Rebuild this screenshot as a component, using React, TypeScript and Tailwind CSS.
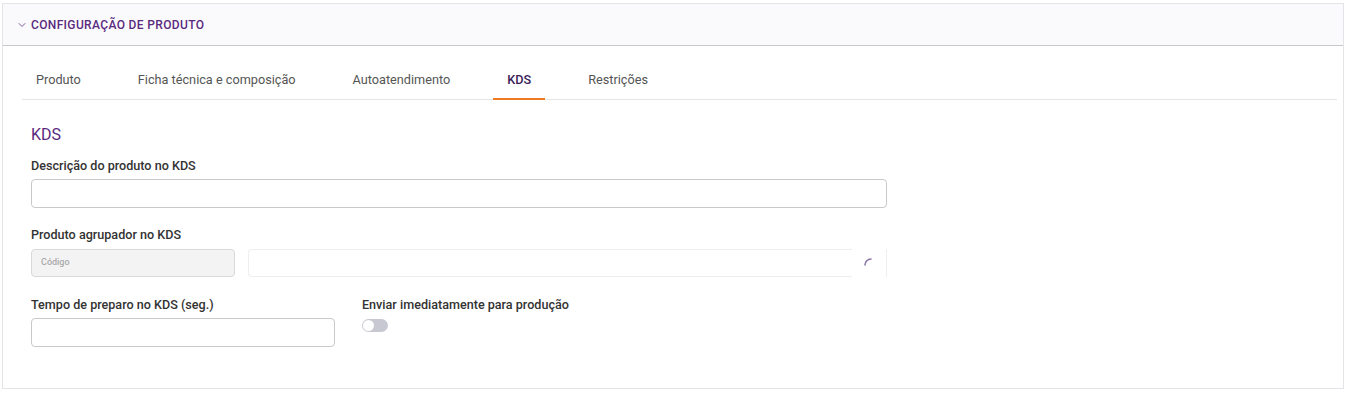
import { ChevronDown } from "lucide-react";

const tabs = ["Produto", "Ficha técnica e composição", "Autoatendimento", "KDS", "Restrições"];

const Label = ({ children }: { children: React.ReactNode }) => (
  <div className="text-[12.6px] font-medium text-[#333] leading-[16px]">{children}</div>
);

export default function App() {
  return (
    <div className="bg-white min-h-[395px] pt-[3px] pl-[2px] pr-[6px] font-['Roboto',sans-serif]">
      <div className="border border-[#e3e3e8] bg-white h-[386px]">
        <div className="h-[42px] bg-[#fafafd] border-b border-[#c8c8cc] flex items-center pl-[13px] gap-[3px]">
          <ChevronDown size={12} strokeWidth={1.5} className="text-[#5a2a7e]" />
          <span className="text-[12px] font-medium uppercase text-[#5a2a7e] tracking-[0.35px]">
            Configuração de produto
          </span>
        </div>

        <div className="pl-[19px] pr-[6px]">
          <div className="mt-[14px] flex gap-[29px] border-b border-[#e6e6e6]">
            {tabs.map((t) => (
              <div
                key={t}
                className={`h-[40px] pt-[1px] px-[14px] flex items-center text-[12.7px] border-b-2 -mb-px ${
                  t === "KDS"
                    ? "border-[#f07a22] text-[#3a1d5a] font-medium"
                    : "border-transparent text-[#555]"
                }`}
              >
                {t}
              </div>
            ))}
          </div>
        </div>

        <div className="pl-[28px] pt-[25px]">
          <div className="text-[16px] text-[#5a2a7e] leading-[20px]">KDS</div>

          <div className="mt-[13px]">
            <Label>Descrição do produto no KDS</Label>
            <div className="mt-[5px] w-[856px] h-[29px] rounded-[4px] border border-[#c9c9cc]" />
          </div>

          <div className="mt-[19px]">
            <Label>Produto agrupador no KDS</Label>
            <div className="mt-[6px] flex items-stretch h-[28px] w-[856px]">
              <div className="w-[204px] rounded-[4px] border border-[#d9d9dc] bg-[#f3f3f4] flex items-center pl-[9px] text-[9px] font-medium text-[#aaa]">
                Código
              </div>
              <div className="ml-[13px] flex-1 border-y border-l border-[#eeeef0] rounded-l-[4px]" />
              <div className="w-[35px] border-r border-[#eeeef0] flex items-center justify-center">
                <svg width="14" height="14" viewBox="0 0 14 14" className="-mt-[2px]">
                  <path d="M3 10 A6 6 0 0 1 9 4" fill="none" stroke="#8b77a6" strokeWidth="1.6" strokeLinecap="round" />
                </svg>
              </div>
            </div>
          </div>

          <div className="mt-[20px] flex gap-[27px]">
            <div>
              <Label>Tempo de preparo no KDS (seg.)</Label>
              <div className="mt-[5px] w-[304px] h-[29px] rounded-[4px] border border-[#c9c9cc]" />
            </div>
            <div>
              <Label>Enviar imediatamente para produção</Label>
              <div className="mt-[6px] w-[26px] h-[13px] rounded-full bg-[#c7c8d2] relative">
                <div className="absolute left-[1px] top-[1px] w-[11px] h-[11px] rounded-full bg-white" />
              </div>
            </div>
          </div>
        </div>
      </div>
    </div>
  );
}
